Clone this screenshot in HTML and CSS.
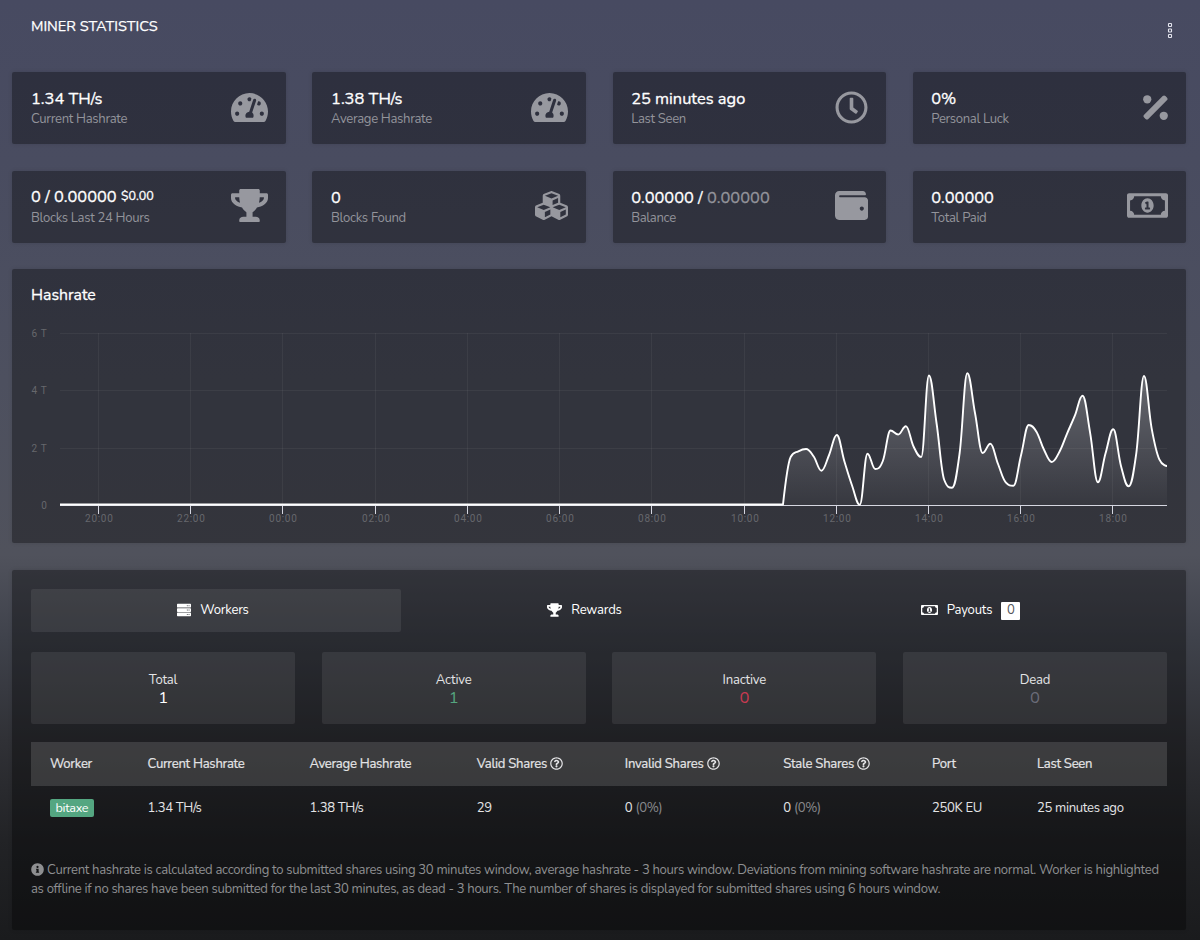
FILE: index.html
```html
<!DOCTYPE html>
<html lang="en">
<head>
<meta charset="utf-8">
<title>Miner Statistics</title>
<link rel="stylesheet" href="styles.css">
</head>
<body>
<svg class="defs" width="0" height="0" aria-hidden="true">
  <symbol id="tacho" viewBox="0 0 576 512"><path fill-rule="evenodd" d="M288 32C128.94 32 0 160.94 0 320c0 52.8 14.25 102.26 39.06 144.8 5.61 9.62 16.3 15.2 27.44 15.2h443c11.14 0 21.83-5.58 27.44-15.2C561.75 422.26 576 372.8 576 320c0-159.06-128.94-288-288-288zm0 64c14.71 0 26.58 10.13 30.32 23.65-1.11 2.26-2.64 4.23-3.45 6.67l-9.22 27.67c-5.13 3.49-10.97 6.01-17.64 6.01-17.67 0-32-14.33-32-32S270.33 96 288 96zM96 384c-17.67 0-32-14.33-32-32s14.33-32 32-32 32 14.33 32 32-14.33 32-32 32zm48-160c-17.67 0-32-14.33-32-32s14.33-32 32-32 32 14.33 32 32-14.33 32-32 32zm246.77-72.41l-61.33 184C343.13 347.33 352 364.54 352 384c0 11.72-3.38 22.55-8.88 32H232.88c-5.5-9.45-8.88-20.28-8.88-32 0-33.94 26.5-61.43 59.9-63.59l61.34-184.01c4.17-12.56 17.73-19.45 30.36-15.17 12.57 4.19 19.35 17.79 15.17 30.36zm14.66 57.2l15.52-46.55c3.47-1.29 7.13-2.23 11.05-2.23 17.67 0 32 14.33 32 32s-14.33 32-32 32c-11.38-.01-20.89-6.28-26.57-15.22zM480 384c-17.67 0-32-14.33-32-32s14.33-32 32-32 32 14.33 32 32-14.33 32-32 32z"/></symbol>
  <symbol id="clock" viewBox="0 0 512 512"><path d="M256 8C119 8 8 119 8 256s111 248 248 248 248-111 248-248S393 8 256 8zm0 448c-110.5 0-200-89.5-200-200S145.5 56 256 56s200 89.5 200 200-89.5 200-200 200zm61.8-104.4l-84.9-61.7c-3.1-2.3-4.9-5.9-4.9-9.7V116c0-6.6 5.4-12 12-12h32c6.6 0 12 5.4 12 12v141.7l66.8 48.6c5.4 3.9 6.5 11.4 2.6 16.8L334.6 349c-3.9 5.3-11.4 6.5-16.8 2.6z"/></symbol>
  <symbol id="percent" viewBox="0 0 384 512"><circle cx="64" cy="128" r="64"/><circle cx="320" cy="384" r="64"/><rect x="-42" y="210" width="468" height="92" rx="30" transform="rotate(-45 192 256)"/></symbol>
  <symbol id="trophy" viewBox="0 0 576 512"><path d="M552 64H448V24c0-13.3-10.7-24-24-24H152c-13.3 0-24 10.7-24 24v40H24C10.7 64 0 74.7 0 88v56c0 35.7 22.5 72.4 61.9 100.7 31.5 22.7 69.8 37.1 110 41.7C203.3 338.5 240 360 240 360v72h-48c-35.3 0-64 20.7-64 56v12c0 6.6 5.4 12 12 12h296c6.6 0 12-5.4 12-12v-12c0-35.3-28.7-56-64-56h-48v-72s36.7-21.5 68.1-73.6c40.3-4.6 78.6-19 110-41.7 39.3-28.3 61.9-65 61.9-100.7V88c0-13.3-10.7-24-24-24zM99.3 192.8C74.9 175.2 64 155.6 64 144v-16h64.2c1 32.6 5.8 61.2 12.8 86.2-15.1-5.2-29.2-12.4-41.7-21.4zM512 144c0 16.1-17.7 36.1-35.3 48.8-12.5 9-26.7 16.2-41.8 21.4 7-25 11.8-53.6 12.8-86.2H512v16z"/></symbol>
  <symbol id="cubes" viewBox="0 0 512 512"><path d="M488.6 250.2L392 214V105.5c0-15-9.3-28.4-23.4-33.7l-100-37.5c-8.1-3.1-17.1-3.1-25.3 0l-100 37.5c-14.1 5.3-23.4 18.7-23.4 33.7V214l-96.6 36.2C9.3 255.5 0 268.9 0 283.9V394c0 13.6 7.7 26.1 19.9 32.2l100 50c10.1 5.1 22.1 5.1 32.2 0l103.9-52 103.9 52c10.1 5.1 22.1 5.1 32.2 0l100-50c12.2-6.1 19.9-18.6 19.9-32.2V283.9c0-15-9.3-28.4-23.4-33.7zM358 214.8l-85 31.9v-68.2l85-37v73.3zM154 104.1l102-38.2 102 38.2v.6l-102 41.4-102-41.4v-.6zm84 291.1l-85 42.5v-79.1l85-38.8v75.4zm0-112l-102 41.4-102-41.4v-.6l102-38.2 102 38.2v.6zm240 112l-85 42.5v-79.1l85-38.8v75.4zm0-112l-102 41.4-102-41.4v-.6l102-38.2 102 38.2v.6z"/></symbol>
  <symbol id="wallet" viewBox="0 0 512 512"><path d="M461.2 128H80c-8.84 0-16-7.16-16-16s7.16-16 16-16h384c8.84 0 16-7.16 16-16 0-26.51-21.49-48-48-48H64C28.65 32 0 60.65 0 96v320c0 35.35 28.65 64 64 64h397.2c28.02 0 50.8-21.53 50.8-48V176c0-26.47-22.78-48-50.8-48zM416 336c-17.67 0-32-14.33-32-32s14.33-32 32-32 32 14.33 32 32-14.33 32-32 32z"/></symbol>
  <symbol id="money" viewBox="0 0 640 512"><path d="M320 144c-53.02 0-96 50.14-96 112 0 61.85 42.98 112 96 112 53 0 96-50.13 96-112 0-61.86-42.98-112-96-112zm40 168c0 4.42-3.58 8-8 8h-64c-4.42 0-8-3.58-8-8v-16c0-4.42 3.58-8 8-8h16v-55.44l-.47.31a7.992 7.992 0 0 1-11.09-2.22l-8.88-13.31a7.992 7.992 0 0 1 2.22-11.09l15.33-10.22a23.99 23.99 0 0 1 13.31-4.03H328c4.42 0 8 3.58 8 8v88h16c4.42 0 8 3.58 8 8v16zM608 64H32C14.33 64 0 78.33 0 96v320c0 17.67 14.33 32 32 32h576c17.67 0 32-14.33 32-32V96c0-17.67-14.33-32-32-32zm-16 272c-35.35 0-64 28.65-64 64H112c0-35.35-28.65-64-64-64V176c35.35 0 64-28.65 64-64h416c0 35.35 28.65 64 64 64v160z"/></symbol>
  <symbol id="server" viewBox="0 0 512 512"><path fill-rule="evenodd" d="M24 28h464q24 0 24 24v92q0 24-24 24H24q-24 0-24-24V52q0-24 24-24zM24 188h464q24 0 24 24v92q0 24-24 24H24q-24 0-24-24v-92q0-24 24-24zM24 348h464q24 0 24 24v88q0 24-24 24H24q-24 0-24-24v-88q0-24 24-24zM440 80a18 18 0 1 0 .1 0zM376 80a18 18 0 1 0 .1 0zM440 240a18 18 0 1 0 .1 0zM376 240a18 18 0 1 0 .1 0zM440 400a18 18 0 1 0 .1 0zM376 400a18 18 0 1 0 .1 0z"/></symbol>
  <symbol id="question" viewBox="0 0 512 512"><path d="M256 8C119.043 8 8 119.083 8 256c0 136.997 111.043 248 248 248s248-111.003 248-248C504 119.083 392.957 8 256 8zm0 448c-110.532 0-200-89.431-200-200 0-110.495 89.472-200 200-200 110.491 0 200 89.471 200 200 0 110.53-89.431 200-200 200zm107.244-255.2c0 67.052-72.421 68.084-72.421 92.863V300c0 6.627-5.373 12-12 12h-45.647c-6.627 0-12-5.373-12-12v-8.659c0-35.745 27.1-50.034 47.579-61.516 17.561-9.845 28.324-16.541 28.324-29.579 0-17.246-21.999-28.693-39.784-28.693-23.189 0-33.894 10.977-48.942 29.969-4.057 5.12-11.46 6.071-16.666 2.124l-27.824-21.098c-5.107-3.872-6.251-11.066-2.644-16.363C184.846 131.491 214.94 112 261.794 112c49.071 0 101.45 38.304 101.45 88.8zM298 368c0 23.159-18.841 42-42 42s-42-18.841-42-42 18.841-42 42-42 42 18.841 42 42z"/></symbol>
  <symbol id="info" viewBox="0 0 512 512"><path fill-rule="evenodd" d="M256 8a248 248 0 1 0 .1 0zM256 110a42 42 0 1 1-.1 0zM200 224h100v120h20v44H192v-44h24v-76h-16z"/></symbol>
</svg>
<main class="page">
  <header class="head">
    <h1 class="title">MINER STATISTICS</h1>
    <svg class="kebab" width="6" height="17" viewBox="0 0 6 17"><rect x="1.5" y="1.5" width="3" height="3" rx=".6"/><rect x="1.5" y="7" width="3" height="3" rx=".6"/><rect x="1.5" y="12.5" width="3" height="3" rx=".6"/></svg>
  </header>
  <section class="stats">
    <div class="card stat"><div><div class="value">1.34 TH/s</div><div class="label">Current Hashrate</div></div><svg class="ico w37"><use href="#tacho"/></svg></div>
    <div class="card stat"><div><div class="value">1.38 TH/s</div><div class="label">Average Hashrate</div></div><svg class="ico w37"><use href="#tacho"/></svg></div>
    <div class="card stat"><div><div class="value">25 minutes ago</div><div class="label">Last Seen</div></div><svg class="ico w33"><use href="#clock"/></svg></div>
    <div class="card stat"><div><div class="value">0%</div><div class="label">Personal Luck</div></div><svg class="ico w25"><use href="#percent"/></svg></div>
    <div class="card stat"><div><div class="value">0 / 0.00000 <span class="usd">$0.00</span></div><div class="label">Blocks Last 24 Hours</div></div><svg class="ico w37"><use href="#trophy"/></svg></div>
    <div class="card stat"><div><div class="value">0</div><div class="label">Blocks Found</div></div><svg class="ico w33"><use href="#cubes"/></svg></div>
    <div class="card stat"><div><div class="value">0.00000 / <span class="dim">0.00000</span></div><div class="label">Balance</div></div><svg class="ico w33"><use href="#wallet"/></svg></div>
    <div class="card stat"><div><div class="value">0.00000</div><div class="label">Total Paid</div></div><svg class="ico w41"><use href="#money"/></svg></div>
  </section>
  <section class="card chart">
    <h2 class="chart-title">Hashrate</h2>
    <svg id="plot" class="plot" width="1174" height="214" viewBox="12 319 1174 214">
      <defs><linearGradient id="fade" gradientUnits="userSpaceOnUse" x1="0" y1="373" x2="0" y2="505"><stop offset="0" stop-color="#fff" stop-opacity=".26"/><stop offset="1" stop-color="#fff" stop-opacity=".02"/></linearGradient></defs>
    </svg>
  </section>
  <section class="card panel">
    <nav class="tabs">
      <a class="tab active"><svg class="s14"><use href="#server"/></svg><span>Workers</span></a>
      <a class="tab second"><svg class="s15"><use href="#trophy"/></svg><span>Rewards</span></a>
      <a class="tab last"><svg class="s17"><use href="#money"/></svg><span>Payouts</span><b class="count">0</b></a>
    </nav>
    <div class="tiles">
      <div class="tile"><div>Total</div><div class="big white">1</div></div>
      <div class="tile"><div>Active</div><div class="big green">1</div></div>
      <div class="tile"><div>Inactive</div><div class="big red">0</div></div>
      <div class="tile"><div>Dead</div><div class="big gray">0</div></div>
    </div>
    <div class="row thead"><span>Worker</span><span>Current Hashrate</span><span>Average Hashrate</span><span>Valid Shares <svg class="q"><use href="#question"/></svg></span><span>Invalid Shares <svg class="q"><use href="#question"/></svg></span><span>Stale Shares <svg class="q"><use href="#question"/></svg></span><span>Port</span><span>Last Seen</span></div>
    <div class="row"><span><b class="badge">bitaxe</b></span><span>1.34 TH/s</span><span>1.38 TH/s</span><span>29</span><span>0 <i>(0%)</i></span><span>0 <i>(0%)</i></span><span>250K EU</span><span>25 minutes ago</span></div>
    <p class="note"><svg class="q"><use href="#info"/></svg> Current hashrate is calculated according to submitted shares using 30 minutes window, average hashrate - 3 hours window. Deviations from mining software hashrate are normal. Worker is highlighted<br>as offline if no shares have been submitted for the last 30 minutes, as dead - 3 hours. The number of shares is displayed for submitted shares using 6 hours window.</p>
  </section>
</main>
<script src="chart.js"></script>
</body>
</html>
```
FILE: chart.js
```js
const svg = document.getElementById('plot');
function add(tag, attrs, text) {
  const el = document.createElementNS('http://www.w3.org/2000/svg', tag);
  for (const k in attrs) el.setAttribute(k, attrs[k]);
  if (text) el.textContent = text;
  svg.appendChild(el);
}
[['6 T', 333.5], ['4 T', 390.5], ['2 T', 448.5], ['0', 505.5]].forEach(([t, y], i) => {
  if (i < 3) add('line', { x1: 60, x2: 1167, y1: y, y2: y, class: 'grid' });
  add('text', { x: 47.5, y: y + 3.5, class: 'axis end' }, t);
});
const hours = ['20', '22', '00', '02', '04', '06', '08', '10', '12', '14', '16', '18'];
const tickX = hours.map((h, i) => Math.floor(98.5 + i * 92.22) + 0.5);
tickX.forEach(x => add('line', { x1: x, x2: x, y1: 333, y2: 505, class: 'grid' }));

// Ten-minute samples, vertical positions from 10:50 onward
const ys = [504.5, 457, 451.3, 449, 456.5, 470.7, 455, 435, 461.5, 485.7, 504.7, 453.7, 469, 461, 430.5, 434.5, 426.3, 446.5, 457, 375.5, 423.5, 480, 487.7, 453, 373.3, 413, 453, 443.7, 464, 482.3, 485.7, 455, 425, 431.7, 450, 462, 451.7, 433.3, 415.7, 395.7, 433.3, 482.3, 453.3, 429.3, 465.7, 486.3, 453.3, 376, 428.3, 459.3, 466];
const pts = [[60, 504.5], [775, 504.5]].concat(ys.map((y, i) => [783 + i * 7.68, y]));
let d = `M${pts[0]}`, prevR = pts[0];
for (let i = 1; i < pts.length; i++) {
  const [x, y] = pts[i], [px, py] = pts[i - 1], next = pts[i + 1];
  let lx = x, ly = y, rx = x, ry = y;
  if (next && i > 2) {
    const [nx, ny] = next;
    lx = (1.5 * x + px) / 2.5; ly = (1.5 * y + py) / 2.5;
    rx = (1.5 * x + nx) / 2.5; ry = (1.5 * y + ny) / 2.5;
    const c = (ry - ly) * (rx - x) / (rx - lx) + y - ry;
    ly += c; ry += c;
    if (ly > py && ly > y) { ly = Math.max(py, y); ry = 2 * y - ly; }
    else if (ly < py && ly < y) { ly = Math.min(py, y); ry = 2 * y - ly; }
    if (ry > ny && ry > y) { ry = Math.max(ny, y); ly = 2 * y - ry; }
    else if (ry < ny && ry < y) { ry = Math.min(ny, y); ly = 2 * y - ry; }
  }
  d += `C${prevR} ${lx},${ly} ${x},${y}`;
  prevR = [rx, ry];
}
add('path', { d: `${d}V505H60Z`, fill: 'url(#fade)' });
add('line', { x1: 60, x2: 1167, y1: 505.5, y2: 505.5, class: 'base' });
tickX.forEach((x, i) => {
  add('line', { x1: x, x2: x, y1: 505, y2: 514, class: 'base' });
  add('text', { x: x + 0.8, y: 522, class: 'axis mid' }, hours[i] + ':00');
});
add('path', { d, class: 'series' });
```
FILE: styles.css
```css
* { box-sizing: border-box; }
html { height: 100%; }
body {
  margin: 0;
  height: 940px;
  overflow: hidden;
  font: 13.1px/18px Nunito, Lato, "Open Sans", sans-serif;
  letter-spacing: -.323px;
  color: #e4e4e6;
  background: linear-gradient(#474a61 0, #494c60 160px, #4d505f 380px, #50525c 555px, #3f424b 640px, #303136 740px, #222326 840px, #1a1b1d 940px);
}
.defs { position: absolute; }
.page { padding: 0 14px 0 12.4px; }
.head { height: 72px; padding: 16px 12.6px 0 18.6px; display: flex; justify-content: space-between; }
.title { margin: 0; font-size: 14.5px; letter-spacing: 0; font-weight: 400; line-height: 20px; color: #fff; -webkit-text-stroke: .25px; }
.kebab { margin-top: 6px; fill: none; stroke: #e4e5ee; stroke-width: 1.1; }
.card { background: rgba(0, 0, 0, .35); border-radius: 2px; box-shadow: 0 0 4px rgba(0, 0, 0, .12); }
.stats { display: grid; grid-template-columns: repeat(4, 1fr); gap: 26.5px 26.7px; }
.stat { height: 72.2px; padding: 0 18px 0 18.6px; display: flex; justify-content: space-between; align-items: center; }
.value { font-size: 16.4px; letter-spacing: 0; line-height: 20px; color: #fff; -webkit-text-stroke: .3px; padding-top: 1px; white-space: nowrap; }
.label { color: #93949b; line-height: 20px; white-space: nowrap; margin-bottom: -1px; }
.usd { font-size: 12.5px; position: relative; top: -2px; }
.dim { color: #93949b; }
.ico { fill: #97989f; height: 33px; margin-top: -2px; }
.w37 { width: 37px; }
.w33 { width: 33px; }
.w25 { width: 25px; }
.w41 { width: 41px; }
.chart { margin-top: 26.5px; height: 274px; }
.chart-title { margin: 0; padding: 15.6px 19px 0 18.6px; height: 50px; font-size: 15.8px; letter-spacing: 0; line-height: 20px; font-weight: 400; color: #fff; -webkit-text-stroke: .3px; }
.plot { display: block; }
.grid { stroke: rgba(255, 255, 255, .05); }
.base { stroke: #d5d6e0; }
.axis { font: 10px Roboto, sans-serif; letter-spacing: .7px; fill: #66676c; }
.end { text-anchor: end; }
.mid { text-anchor: middle; }
.series { fill: none; stroke: #fff; stroke-width: 1.9; stroke-linejoin: round; }
.panel { margin-top: 26.8px; height: 360px; padding: 18.5px 19px 18.5px 18.6px; }
.tabs { display: grid; grid-template-columns: 370px 370px 396px; height: 43.5px; }
.tab { display: flex; align-items: center; justify-content: center; color: #fff; letter-spacing: -.2px; padding-right: 6px; }
.tab span { padding-top: 0; }
.tab svg { fill: #fff; height: 14px; margin-right: 9px; }
.second { padding-right: 3px; }
.last { padding: 0 0 0 3px; }
.active { background: rgba(255, 255, 255, .08); border-radius: 2px; }
.s14 { width: 14px; }
.s15 { width: 15px; }
.s17 { width: 17px; }
.count { background: #fff; color: #55565c; font-weight: 400; width: 19px; height: 18px; line-height: 17px; text-align: center; margin: 2px 0 0 9px; border-radius: 1px; }
.tiles { display: grid; grid-template-columns: repeat(4, 1fr); gap: 26.6px; margin-top: 20px; }
.tile { height: 72px; padding-top: 18.4px; background: rgba(255, 255, 255, .08); border-radius: 2px; text-align: center; letter-spacing: -.2px; }
.big { font-size: 16.6px; }
.white { color: #fff; }
.green { color: #55a57f; }
.red { color: #c93a51; }
.gray { color: #6b6c78; }
.row { display: grid; grid-template-columns: 97.5px 162px 167.3px 148px 158.5px 148.7px 105px 1fr; padding-left: 19px; height: 44px; line-height: 45px; white-space: nowrap; }
.row i { font-style: normal; color: #88898c; }
.thead { margin-top: 18px; background: rgba(255, 255, 255, .135); }
.thead > span { -webkit-text-stroke: .2px; letter-spacing: -.27px; }
.q { width: 13px; height: 13px; fill: currentColor; vertical-align: -2px; }
.badge { display: inline-block; background: #54a681; color: #fff; font-weight: 400; font-size: 12.6px; line-height: 18px; padding: 0 5.6px; border-radius: 2px; }
.note { margin: 31px 0 0; line-height: 18.6px; color: #8e8f91; white-space: nowrap; }
```
